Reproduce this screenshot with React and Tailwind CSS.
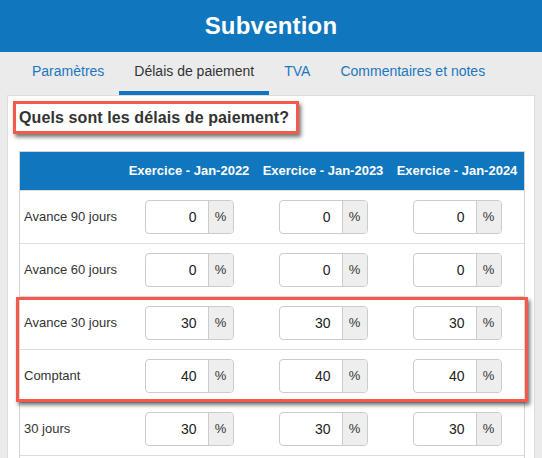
import React from "react";

const cols = ["Exercice - Jan-2022", "Exercice - Jan-2023", "Exercice - Jan-2024"];
const rows = [
  ["Avance 90 jours", "0"],
  ["Avance 60 jours", "0"],
  ["Avance 30 jours", "30"],
  ["Comptant", "40"],
  ["30 jours", "30"],
];

function PctInput({ value }) {
  return (
    <div className="flex h-[34px] w-[89px] rounded-[4px] border border-[#cccccc] overflow-hidden bg-white">
      <div className="flex-1 flex items-center justify-end pr-[11px] text-[14px] text-[#222]">{value}</div>
      <div className="w-[25px] flex items-center justify-center bg-[#eeeeee] border-l border-[#cccccc] text-[13px] text-[#333]">%</div>
    </div>
  );
}

export default function App() {
  const tabs = ["Paramètres", "Délais de paiement", "TVA", "Commentaires et notes"];
  return (
    <div className="w-[542px] h-[458px] overflow-hidden bg-[#ebebeb] flex flex-col" style={{ fontFamily: '"Liberation Sans", Arial, sans-serif' }}>
      <div className="h-[52px] shrink-0 bg-[#1076bd] flex items-center justify-center text-white font-bold text-[24px] tracking-[0.2px]">
        Subvention
      </div>
      <div className="h-[43px] shrink-0 flex pl-[17px]">
        {tabs.map((t, i) => (
          <div
            key={t}
            className={
              i === 1
                ? "px-[15px] flex items-center text-[14px] text-[#333] border-b-4 border-[#1076bd]"
                : "px-[15px] flex items-center text-[14px] text-[#1b77bf] border-b-4 border-transparent"
            }
          >
            {t}
          </div>
        ))}
      </div>
      <div className="mx-[7px] flex-1 bg-white border border-[#dddddd] px-[11px]">
        <div className="pt-[10px]">
          <div className="relative inline-block text-[16px] leading-[20px] font-bold text-[#333] tracking-[0.1px]">
            Quels sont les délais de paiement?
            <div className="absolute left-[-6px] top-[-7px] w-[286px] h-[33px] border-[3px] border-[#f35a4b] shadow-[2px_3px_4px_rgba(0,0,0,0.55)]"></div>
          </div>
        </div>
        <div className="relative mt-[21px] w-[506px] border border-[#d5d5d5]">
          <div className="grid grid-cols-[102px_134px_134px_134px] h-[38px] bg-[#1076bd] text-white font-bold text-[13px]">
            <div></div>
            {cols.map((c) => (
              <div key={c} className="flex items-center justify-center whitespace-nowrap">{c}</div>
            ))}
          </div>
          {rows.map(([label, v]) => (
            <div key={label} className="grid grid-cols-[102px_134px_134px_134px] h-[53px] border-t border-[#dddddd]">
              <div className="flex items-center pl-[4px] text-[13px] text-[#333]">{label}</div>
              {cols.map((c) => (
                <div key={c} className="flex items-center justify-center">
                  <PctInput value={v} />
                </div>
              ))}
            </div>
          ))}
          <div className="h-[20px] border-t border-[#dddddd]"></div>
          <div className="absolute left-[-4px] top-[145px] w-[512px] h-[105px] border-[3px] border-[#f35a4b] shadow-[2px_3px_4px_rgba(0,0,0,0.55)]"></div>
        </div>
      </div>
    </div>
  );
}
